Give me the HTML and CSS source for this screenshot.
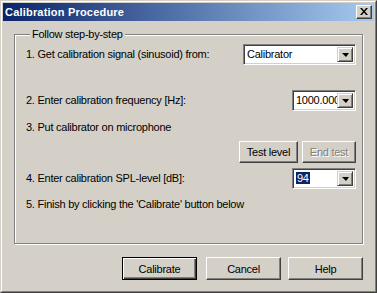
FILE: index.html
```
<!DOCTYPE html>
<html>
<head>
    <meta charset="utf-8">
    <link rel="stylesheet" href="styles.css">
    <title>Calibration Procedure</title>
</head>
<body>
    <div class="window">
        <div class="frame">
            <div class="titlebar">
                <span class="title">Calibration Procedure</span>
                <span class="close">
                    <svg width="8" height="7" viewBox="0 0 8 7">
                        <path d="M0 0h2l2 2.5 2-2.5h2l-3 3.5 3 3.5h-2l-2-2.5-2 2.5h-2l3-3.5z" fill="#000"/>
                    </svg>
                </span>
            </div>

            <div class="client">
                <fieldset class="group">
                    <legend>Follow step-by-step</legend>

                    <div class="row row-1">
                        <span class="label">1. Get calibration signal (sinusoid) from:</span>
                        <div class="combo combo-wide">
                            <span class="combo-text">Calibrator</span>
                            <span class="drop"><span class="arrow"></span></span>
                        </div>
                    </div>

                    <div class="row row-2">
                        <span class="label">2. Enter calibration frequency [Hz]:</span>
                        <div class="combo combo-small">
                            <span class="combo-text">1000.000</span>
                            <span class="drop"><span class="arrow"></span></span>
                        </div>
                    </div>

                    <div class="row row-3">
                        <span class="label">3. Put calibrator on microphone</span>
                    </div>

                    <div class="row row-test">
                        <button class="btn btn-test">Test level</button>
                        <button class="btn btn-end" disabled>End test</button>
                    </div>

                    <div class="row row-4">
                        <span class="label">4. Enter calibration SPL-level [dB]:</span>
                        <div class="combo combo-small">
                            <span class="combo-text"><span class="selected">94</span></span>
                            <span class="drop"><span class="arrow"></span></span>
                        </div>
                    </div>

                    <div class="row row-5">
                        <span class="label">5. Finish by clicking the 'Calibrate' button below</span>
                    </div>
                </fieldset>

                <div class="actions">
                    <button class="btn btn-dialog btn-default">Calibrate</button>
                    <button class="btn btn-dialog btn-cancel">Cancel</button>
                    <button class="btn btn-dialog btn-help">Help</button>
                </div>
            </div>
        </div>
    </div>
</body>
</html>
```

FILE: styles.css
```
* {
    box-sizing: border-box;
}

html, body {
    margin: 0;
    padding: 0;
}

body {
    font-family: "Liberation Sans", Arial, sans-serif;
    font-size: 11px;
    line-height: 13px;
    letter-spacing: -0.25px;
    color: #000000;
    background-color: #d4d0c8;
}

.window {
    width: 377px;
    height: 293px;
    border: 1px solid;
    border-color: #d4d0c8 #404040 #404040 #d4d0c8;
}

.frame {
    height: 100%;
    border: 1px solid;
    border-color: #ffffff #808080 #808080 #ffffff;
    padding: 1px;
    display: flex;
    flex-direction: column;
}

.titlebar {
    height: 18px;
    display: flex;
    align-items: center;
    justify-content: space-between;
    padding: 0 2px 0 2px;
    background: linear-gradient(to right, #0a246a, #a6caf0);
}

    .titlebar .title {
        color: #ffffff;
        font-weight: bold;
        font-size: 11px;
        letter-spacing: 0.2px;
    }

.close {
    width: 16px;
    height: 14px;
    display: flex;
    align-items: center;
    justify-content: center;
    background-color: #d4d0c8;
    border: 1px solid;
    border-color: #ffffff #404040 #404040 #ffffff;
    box-shadow: inset -1px -1px 0 #808080;
    padding-bottom: 1px;
}

.client {
    flex: 1;
    padding: 7px 11px 0 11px;
}

.group {
    margin: 0;
    padding: 3px 6px 32px 11px;
    border: 1px solid #808080;
    box-shadow: 1px 1px 0 #ffffff, inset 1px 1px 0 #ffffff;
}

    .group legend {
        padding: 0 2px;
        margin-left: 4px;
        background-color: #d4d0c8;
        line-height: 13px;
    }

.row {
    display: flex;
    align-items: center;
    justify-content: space-between;
}

.row-1 {
    height: 21px;
}

.row-2 {
    height: 21px;
    margin-top: 25px;
}

.row-3 {
    height: 13px;
    margin-top: 10px;
}

.row-test {
    height: 22px;
    margin-top: 7px;
    justify-content: flex-end;
    gap: 4px;
}

.row-4 {
    height: 21px;
    margin-top: 5px;
}

.row-5 {
    height: 13px;
    margin-top: 9px;
}

.label {
    white-space: nowrap;
}

.combo {
    height: 21px;
    display: flex;
    background-color: #ffffff;
    border: 1px solid;
    border-color: #808080 #ffffff #ffffff #808080;
    box-shadow: inset 1px 1px 0 #404040, inset -1px -1px 0 #d4d0c8;
    padding: 2px;
}

.combo-wide {
    width: 113px;
}

.combo-small {
    width: 64px;
}

.combo-text {
    flex: 1;
    overflow: hidden;
    white-space: nowrap;
    padding-left: 1px;
    line-height: 15px;
}

.selected {
    background-color: #0a246a;
    color: #ffffff;
    padding: 0 1px;
}

.drop {
    width: 16px;
    flex: none;
    display: flex;
    align-items: center;
    justify-content: center;
    background-color: #d4d0c8;
    border: 1px solid;
    border-color: #d4d0c8 #404040 #404040 #d4d0c8;
    box-shadow: inset 1px 1px 0 #ffffff, inset -1px -1px 0 #808080;
}

.arrow {
    width: 0;
    height: 0;
    border-left: 4px solid transparent;
    border-right: 3px solid transparent;
    border-top: 4px solid #000000;
}

.btn {
    font-family: "Liberation Sans", Arial, sans-serif;
    font-size: 11px;
    letter-spacing: -0.25px;
    color: #000000;
    background-color: #d4d0c8;
    border: 1px solid;
    border-color: #ffffff #404040 #404040 #ffffff;
    box-shadow: inset -1px -1px 0 #808080;
    padding: 0;
    margin: 0;
}

.btn-test {
    width: 59px;
    height: 22px;
}

.btn-end {
    width: 54px;
    height: 22px;
    color: #808080;
    text-shadow: 1px 1px 0 #ffffff;
}

.actions {
    display: flex;
    justify-content: flex-end;
    margin-top: 13px;
}

.btn-dialog {
    width: 75px;
    height: 23px;
}

.btn-default {
    border: 1px solid #000000;
    box-shadow: inset 1px 1px 0 #ffffff, inset -1px -1px 0 #404040, inset -2px -2px 0 #808080;
}

.btn-cancel {
    margin-left: 9px;
}

.btn-help {
    margin-left: 7px;
}
```
